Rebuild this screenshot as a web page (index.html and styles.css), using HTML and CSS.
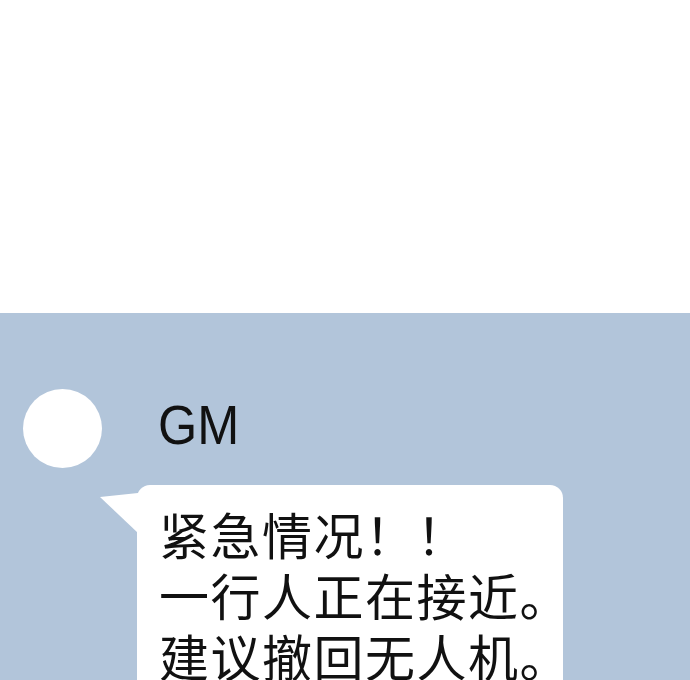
FILE: index.html
```html
<!DOCTYPE html>
<html lang="zh-CN">
<head>
    <meta charset="UTF-8">
    <meta name="viewport" content="width=device-width, initial-scale=1.0">
    <title>GM</title>
    <link rel="stylesheet" href="styles.css">
</head>
<body>
    <div class="blank"></div>
    <div class="chat">
        <div class="message">
            <div class="avatar"></div>
            <div class="content">
                <div class="name"><span>GM</span></div>
                <div class="bubble">
                    <p>紧急情况！！</p>
                    <p>一行人正在接近。</p>
                    <p>建议撤回无人机。</p>
                </div>
            </div>
        </div>
    </div>
</body>
</html>
```

FILE: styles.css
```css
html, body {
    margin: 0;
    padding: 0;
    height: 100%;
    background: #fff;
    font-family: "Liberation Sans", "Noto Sans CJK SC", sans-serif;
    overflow: hidden;
}

.blank {
    height: 313px;
}

.chat {
    background-color: #b2c5da;
    height: 367px;
    padding: 76px 0 0 23px;
    box-sizing: border-box;
}

.message {
    display: flex;
    align-items: flex-start;
}

.avatar {
    width: 79px;
    height: 79px;
    border-radius: 50%;
    background: #fff;
    flex-shrink: 0;
}

.content {
    margin-left: 35px;
}

.name {
    padding-left: 21px;
    margin-top: 6px;
    height: 60px;
    font-size: 56px;
    line-height: 60px;
    color: #111;
}

.name span {
    display: inline-block;
    transform: scaleX(0.9);
    transform-origin: left center;
}

.bubble {
    position: relative;
    margin-top: 30px;
    background: #fff;
    border-radius: 13px;
    padding: 18px 0 20px 22px;
    width: 426px;
    box-sizing: border-box;
}

.bubble::before {
    content: "";
    position: absolute;
    left: -37px;
    top: 5px;
    width: 38px;
    height: 43px;
    background: #fff;
    clip-path: polygon(0 7px, 100% 3px, 100% 100%);
}

.bubble p {
    margin: 0;
    font-family: "Noto Sans CJK SC", sans-serif;
    font-size: 50px;
    letter-spacing: 1.5px;
    line-height: 61px;
    color: #111;
    white-space: nowrap;
}
```
